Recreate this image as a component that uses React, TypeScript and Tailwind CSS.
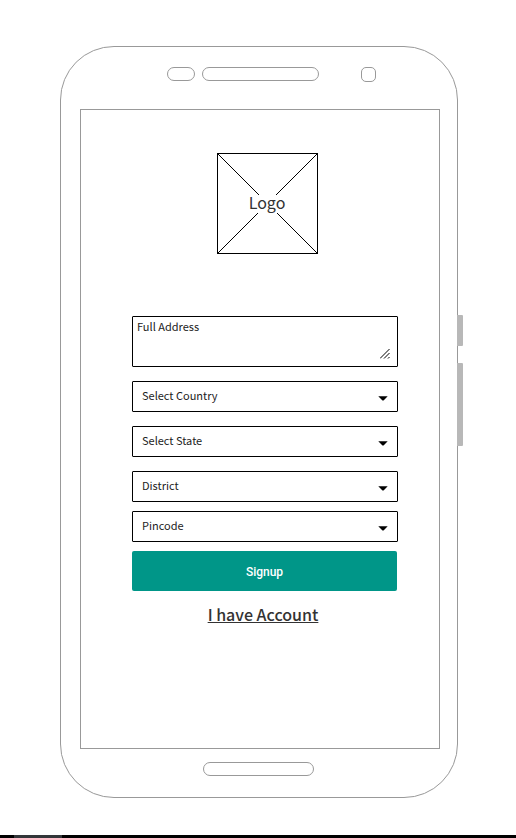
import React from "react";

const SANS = "font-['Noto_Sans_CJK_SC',sans-serif]";

function SelectField({ label, className = "" }: { label: string; className?: string }) {
  return (
    <div className={`relative ${className}`}>
      <select
        aria-label={label}
        className={`block h-[31px] w-full appearance-none rounded-[1px] border border-black bg-white pb-1 pl-[9px] pr-8 text-[11px] leading-4 text-[#222222] ${SANS}`}
      >
        <option>{label}</option>
      </select>
      <svg
        className="pointer-events-none absolute right-[10px] top-[15px]"
        width="10"
        height="5"
        viewBox="0 0 10 5"
        aria-hidden="true"
      >
        <path d="M0.3 0.3H9.7L5.8 4.2Q5 4.8 4.2 4.2Z" fill="#000" />
      </svg>
    </div>
  );
}

function Logo() {
  return (
    <div className="relative ml-[4px] flex size-[101px] items-center justify-center border border-black">
      <svg
        className="absolute inset-0 size-full"
        viewBox="0 0 99 99"
        preserveAspectRatio="none"
        stroke="#000"
        strokeWidth="1"
        aria-hidden="true"
      >
        <path d="M0 0L99 99M99 0L0 99" />
      </svg>
      <span className={`relative bg-white pb-1 text-base leading-[14px] text-[#333333] ${SANS}`}>Logo</span>
    </div>
  );
}

export default function App() {
  return (
    <div className="flex min-h-screen flex-col bg-white">
      <main className="grow pl-[60px] pr-[58px] pt-[46px]">
        <div className="relative flex flex-col rounded-[54px] border border-[#999999] pb-[21px] pl-[19px] pr-[17px] pt-[20px]">
          <span className="absolute -right-[6px] top-[268px] h-[31px] w-[6px] rounded-r-[1px] bg-[#b8b8b8]" />
          <span className="absolute -right-[6px] top-[316px] h-[83px] w-[6px] rounded-r-[1px] bg-[#b8b8b8]" />

          <div className="flex items-start pl-[87px] pr-[64px]">
            <span className="h-[14px] w-[28px] rounded-[7px] border border-[#999999]" />
            <span className="ml-[7px] h-[14px] w-[117px] rounded-[7px] border border-[#999999]" />
            <span className="ml-auto size-[15px] rounded-[5px] border border-[#999999]" />
          </div>

          <div className="mt-[27px] flex h-[640px] flex-col items-center border border-[#999999] pl-[51px] pr-[41px] pt-[43px]">
            <Logo />
            <form className="mt-[62px] flex w-full flex-col" onSubmit={(e) => e.preventDefault()}>
              <div className="relative">
                <textarea
                  aria-label="Full Address"
                  placeholder="Full Address"
                  className={`block h-[51px] w-full resize-none rounded-[1px] border border-black bg-white px-1 py-px text-[11px] leading-4 text-[#222222] placeholder:text-[#222222] ${SANS}`}
                />
                <svg
                  className="pointer-events-none absolute bottom-[8px] right-[8px]"
                  width="10"
                  height="10"
                  viewBox="0 0 10 10"
                  stroke="#000"
                  strokeWidth="1"
                  aria-hidden="true"
                >
                  <path d="M0 9.5L9.5 0M4 9.5L9.5 4M8 9.5L9.5 8" />
                </svg>
              </div>
              <SelectField label="Select Country" className="mt-[14px]" />
              <SelectField label="Select State" className="mt-[14px]" />
              <SelectField label="District" className="mt-[14px]" />
              <SelectField label="Pincode" className="mt-[9px]" />
              <button
                type="submit"
                className="mr-px mt-[9px] h-10 rounded-[2px] bg-[#009688] pt-[2px] font-['Roboto',sans-serif] text-xs font-medium text-white"
              >
                Signup
              </button>
            </form>
            <a
              href="#login"
              className={`mr-[4px] mt-[11px] text-base leading-6 font-medium text-[#333333] underline ${SANS}`}
            >
              I have Account
            </a>
          </div>

          <span className="ml-[123px] mt-[13px] h-[14px] w-[111px] rounded-[7px] border border-[#999999]" />
        </div>
      </main>
      <footer className="h-[3px] bg-black pl-[14px]">
        <div className="h-full w-[48px] bg-[#333639]" />
      </footer>
    </div>
  );
}
